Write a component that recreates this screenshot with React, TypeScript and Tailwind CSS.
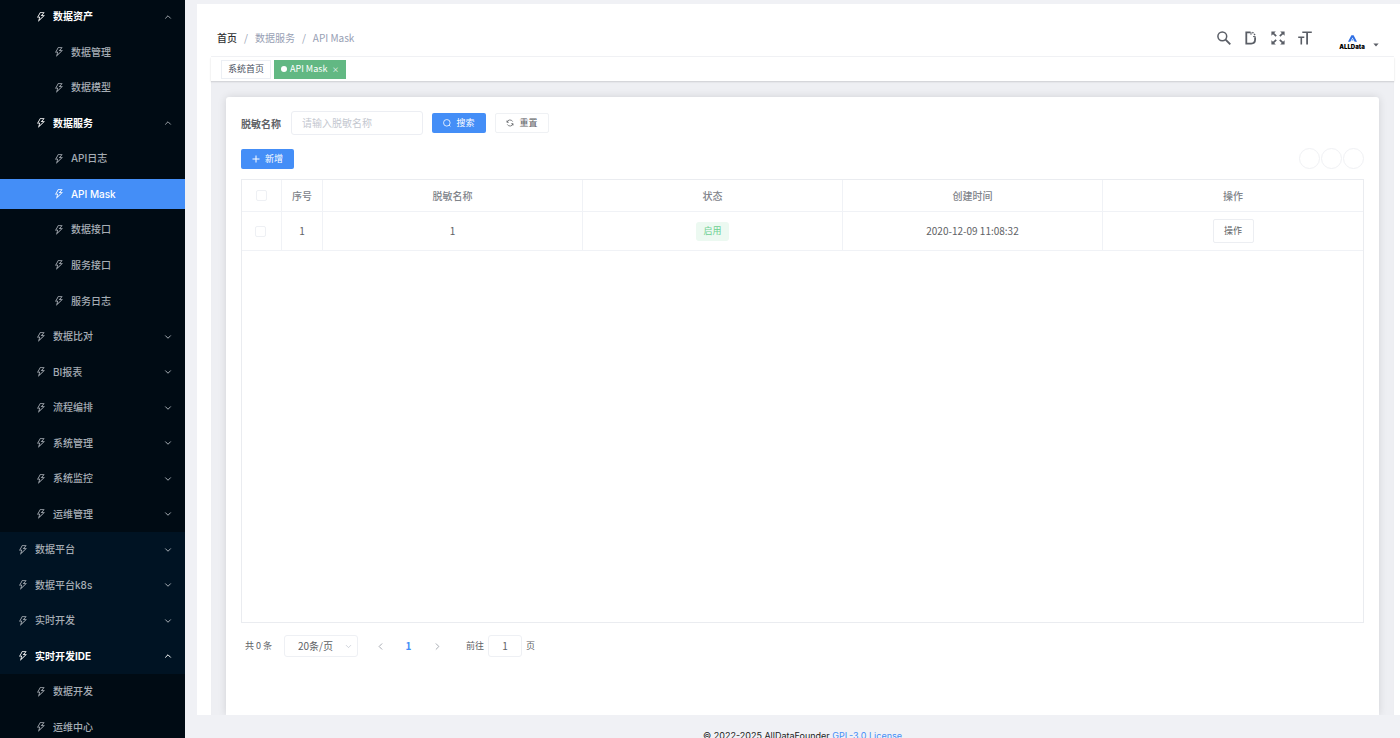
import { AiOutlineThunderbolt } from "react-icons/ai";
import { ChevronDown, ChevronLeft, ChevronRight, ChevronUp } from "lucide-react";

type MenuItem = {
  label: string;
  level: 1 | 2 | 3;
  state?: "open" | "closed";
  active?: boolean;
};

const menu: MenuItem[] = [
  { label: "数据资产", level: 2, state: "open" },
  { label: "数据管理", level: 3 },
  { label: "数据模型", level: 3 },
  { label: "数据服务", level: 2, state: "open" },
  { label: "API日志", level: 3 },
  { label: "API Mask", level: 3, active: true },
  { label: "数据接口", level: 3 },
  { label: "服务接口", level: 3 },
  { label: "服务日志", level: 3 },
  { label: "数据比对", level: 2, state: "closed" },
  { label: "BI报表", level: 2, state: "closed" },
  { label: "流程编排", level: 2, state: "closed" },
  { label: "系统管理", level: 2, state: "closed" },
  { label: "系统监控", level: 2, state: "closed" },
  { label: "运维管理", level: 2, state: "closed" },
  { label: "数据平台", level: 1, state: "closed" },
  { label: "数据平台k8s", level: 1, state: "closed" },
  { label: "实时开发", level: 1, state: "closed" },
  { label: "实时开发IDE", level: 1, state: "open" },
  { label: "数据开发", level: 2 },
  { label: "运维中心", level: 2 },
];

const indent = { 1: "pl-[17px]", 2: "pl-[35px]", 3: "pl-[53px]" };

function SideMenu() {
  return (
    <nav className="w-[185px] shrink-0 overflow-hidden bg-[#001120] font-['Inter','Noto_Sans_CJK_SC',sans-serif]">
      <ul className="-mt-px flex h-[746px] flex-col">
        {menu.map((item) => {
          const open = item.state === "open";
          const tone = item.active || open ? "text-white" : "text-[#a6adb4]";
          return (
            <li
              key={item.label}
              className={`flex flex-1 items-center ${item.level === 1 ? "bg-[#001323]" : "bg-[#000b14]"}`}
            >
              <a
                href="#"
                className={`flex h-[30px] w-full items-center pr-3 text-[10px] ${indent[item.level]} ${tone} ${
                  item.active ? "bg-[#448ef7] font-medium" : open ? "font-bold" : "font-medium"
                }`}
              >
                <AiOutlineThunderbolt size={12} className="mr-1.5 shrink-0" />
                <span className="flex-1 whitespace-nowrap">{item.label}</span>
                {item.state === "closed" && <ChevronDown size={10} strokeWidth={2.4} />}
                {open && (
                  <ChevronUp
                    size={10}
                    strokeWidth={2.4}
                    className={item.level === 1 ? "text-white" : "text-[#9aa0a6]"}
                  />
                )}
              </a>
            </li>
          );
        })}
      </ul>
    </nav>
  );
}

function SearchGlyph() {
  return (
    <svg width="14" height="14" viewBox="0 0 14 14" fill="none" stroke="#5a5e66">
      <circle cx="5.3" cy="5.3" r="4.4" strokeWidth="1.5" />
      <path d="M8.6 8.6l4.7 4.7" strokeWidth="1.9" />
    </svg>
  );
}

function DocGlyph() {
  return (
    <svg width="14" height="14" viewBox="0 0 14 14" fill="none" stroke="#5a5e66">
      <path d="M6.6 1.4H2.3v11.2h4.9c2.7 0 3.9-1.5 3.9-4V6.2" strokeWidth="1.8" />
      <path d="M7 1.2v2.6" strokeWidth="1" />
      <path d="M8.4 1.2l3.2 3.4" strokeWidth="1.3" strokeDasharray="1.5 .9" />
      <path d="M9 5.6h2.6" strokeWidth="1" />
    </svg>
  );
}

function FullscreenGlyph() {
  return (
    <svg width="14" height="14" viewBox="0 0 14 14" fill="#5a5e66" stroke="#5a5e66">
      <path stroke="none" d="M.4.4h4.4L.4 4.8zM13.6.4H9.2l4.4 4.4zM.4 13.6h4.4L.4 9.2zM13.6 13.6H9.2l4.4-4.4z" />
      <path strokeWidth="1.7" d="M1.8 1.8l3.4 3.4M12.2 1.8L8.8 5.2M1.8 12.2l3.4-3.4M12.2 12.2L8.8 8.8" />
    </svg>
  );
}

function FontSizeGlyph() {
  return (
    <svg width="14" height="14" viewBox="0 0 14 14" fill="#5a5e66">
      <path d="M4.3 .4H13.8V2H10V13.6H8.2V2H4.3zM.2 5.4H6.3V6.9H4.1V13.6H2.5V6.9H.2z" />
    </svg>
  );
}

function Logo() {
  return (
    <span className="flex w-[26px] flex-col items-center">
      <svg width="9" height="7" viewBox="0 0 9 7">
        <path d="M3.4.2h2.2L9 6.8H6.7L4.5 2.5 2.3 6.8H0z" fill="#2f6fe4" />
        <path d="M4.5 3.4l1.2 2.1H3.3z" fill="#5fa0f5" />
      </svg>
      <span className="mt-px font-['Inter',sans-serif] text-[6px] leading-[7px] font-black text-black">
        ALLData
      </span>
    </span>
  );
}

function Header() {
  return (
    <header className="flex h-[53px] items-center border-b border-[#f2f3f6] pt-[14px] pr-[15px] pl-[6px]">
      <ol className="flex flex-1 items-center gap-[7px] text-[10px] text-[#97a0b4]">
        <li>
          <a href="#" className="font-medium text-[#303133]">首页</a>
        </li>
        <li>/</li>
        <li>数据服务</li>
        <li>/</li>
        <li>API Mask</li>
      </ol>
      <div className="flex items-center gap-[13px] pt-[2px]">
        <button aria-label="搜索菜单"><SearchGlyph /></button>
        <button aria-label="文档"><DocGlyph /></button>
        <button aria-label="全屏"><FullscreenGlyph /></button>
        <button aria-label="字号"><FontSizeGlyph /></button>
      </div>
      <button aria-label="用户菜单" className="ml-[27px] flex items-center gap-2 pt-[11px]">
        <Logo />
        <svg width="6" height="4" viewBox="0 0 7 4" fill="#5a5e66" className="mt-1">
          <path d="M.4.2h6.2L3.5 3.8z" />
        </svg>
      </button>
    </header>
  );
}

function TagBar() {
  return (
    <div className="flex h-6 items-center gap-[3px] pl-[10px] text-[9px] shadow-[0_1px_2px_rgba(0,0,0,0.14)]">
      <a href="#" className="flex h-[19px] items-center border border-[#eceff4] bg-white px-[6px] text-[#495060]">
        系统首页
      </a>
      <a href="#" className="flex h-[19px] items-center bg-[#62b883] px-[7px] text-white">
        <span className="mr-[3px] size-[6px] rounded-full bg-white" />
        API Mask
        <span className="ml-1 w-2 text-center text-[7px]">×</span>
      </a>
    </div>
  );
}

function Filters() {
  return (
    <form className="flex items-center text-[9px]">
      <label htmlFor="mask-name" className="mr-[10px] text-[10px] font-bold text-[#606266]">
        脱敏名称
      </label>
      <input
        id="mask-name"
        placeholder="请输入脱敏名称"
        className="mr-[9px] h-6 w-[132px] rounded-[3px] border border-[#eceef3] px-[10px] pb-[2px] text-[10px] text-[#606266] placeholder:text-[#c4c8d0]"
      />
      <button type="button" className="mr-[9px] flex h-5 w-[54px] items-center justify-center gap-[5px] rounded-[2px] bg-[#448ef7] text-white">
        <svg width="8" height="8" viewBox="0 0 9 9" fill="none" stroke="currentColor" strokeWidth=".9">
          <circle cx="4.3" cy="4.3" r="3.7" />
          <path d="M6.9 6.9l1.4 1.4" />
        </svg>
        搜索
      </button>
      <button type="button" className="flex h-5 w-[54px] items-center justify-center gap-[5px] rounded-[2px] border border-[#eff1f4] text-[#606266]">
        <svg width="8" height="8" viewBox="0 0 9 9" fill="none" stroke="currentColor" strokeWidth=".9">
          <path d="M1.2 3.6A3.4 3.4 0 0 1 7.5 2.9M7.8 5.4A3.4 3.4 0 0 1 1.5 6.1M1.1 1.7v2h2M7.9 7.3v-2h-2" />
        </svg>
        重置
      </button>
    </form>
  );
}

function Toolbar() {
  const circle = "size-[21px] rounded-full border border-[#f0f1f4]";
  return (
    <div className="mt-[13px] flex items-center justify-between">
      <button className="flex h-5 w-[53px] items-center justify-center gap-[5px] rounded-[2px] bg-[#448ef7] text-[9px] text-white">
        <svg width="8" height="8" viewBox="0 0 8 8" stroke="currentColor" strokeWidth="1">
          <path d="M4 .5v7M.5 4h7" />
        </svg>
        新增
      </button>
      <div className="flex gap-px">
        <button aria-label="隐藏搜索" className={circle} />
        <button aria-label="刷新" className={circle} />
        <button aria-label="显隐列" className={circle} />
      </div>
    </div>
  );
}

function Checkbox({ label }: { label: string }) {
  return (
    <input
      type="checkbox"
      aria-label={label}
      className="block size-[11px] appearance-none rounded-[2px] border border-[#eef0f4] bg-white"
    />
  );
}

function MaskTable() {
  const cell = "border-r border-b border-[#f0f2f6] p-0 last:border-r-0";
  return (
    <div className="mt-[10px] min-h-[200px] flex-1 border border-[#eaecf0]">
      <table className="w-full table-fixed border-separate border-spacing-0 text-center text-[10px] text-[#606266]">
        <colgroup>
          <col className="w-[40px]" />
          <col className="w-[41px]" />
          <col />
          <col />
          <col />
          <col />
        </colgroup>
        <thead>
          <tr className="h-8 text-[#80838a]">
            <th className={cell}>
              <span className="flex justify-center"><Checkbox label="全选" /></span>
            </th>
            {["序号", "脱敏名称", "状态", "创建时间", "操作"].map((title) => (
              <th key={title} className={`${cell} font-medium`}>{title}</th>
            ))}
          </tr>
        </thead>
        <tbody>
          <tr className="h-[39px]">
            <td className={cell}>
              <span className="flex justify-center pr-[2px]"><Checkbox label="选择第 1 行" /></span>
            </td>
            <td className={`${cell} pb-[2px]`}>1</td>
            <td className={`${cell} pb-[2px]`}>1</td>
            <td className={cell}>
              <span className="inline-flex h-[19px] items-center rounded-[3px] bg-[#ecf9f1] px-[7px] align-middle text-[9px] text-[#6dd091]">
                启用
              </span>
            </td>
            <td className={`${cell} pb-[2px]`}>2020-12-09 11:08:32</td>
            <td className={cell}>
              <button className="h-6 w-[41px] rounded-[2px] border border-[#eceef2] align-middle text-[9px]">操作</button>
            </td>
          </tr>
        </tbody>
      </table>
    </div>
  );
}

function Pagination() {
  return (
    <div className="mt-3 flex h-[22px] items-center pl-1 text-[10px] text-[#606266]">
      <span className="w-[39px] text-[9px]">共 0 条</span>
      <span className="relative flex items-center">
        <select
          aria-label="每页条数"
          className="h-[22px] w-[74px] appearance-none rounded-[3px] border border-[#eef0f4] bg-white pb-[2px] pl-[13px]"
        >
          <option>20条/页</option>
        </select>
        <ChevronDown size={9} strokeWidth={1.6} className="pointer-events-none absolute right-[5px] text-[#b4bac6]" />
      </span>
      <button aria-label="上一页" className="ml-4 flex w-3 justify-center text-[#a0a4ac]">
        <ChevronLeft size={11} strokeWidth={2} />
      </button>
      <button className="mx-[17px] w-[11px] pb-px font-bold text-[#448ef7]">1</button>
      <button aria-label="下一页" className="mr-[23px] flex w-3 justify-center text-[#a0a4ac]">
        <ChevronRight size={11} strokeWidth={2} />
      </button>
      <label className="flex items-center gap-1 text-[9px]">
        前往
        <input
          defaultValue="1"
          className="h-[22px] w-[34px] rounded-[3px] border border-[#eef0f4] pb-[2px] text-center text-[10px]"
        />
        页
      </label>
    </div>
  );
}

export default function App() {
  return (
    <div className="flex h-screen overflow-hidden bg-[#f0f1f5] font-['Noto_Sans_CJK_SC',sans-serif]">
      <SideMenu />
      <div className="flex min-w-0 flex-1 flex-col">
        <main className="mt-1 ml-3 flex min-h-0 flex-1 flex-col bg-white pr-[6px] pl-[14px]">
          <Header />
          <TagBar />
          <div className="flex min-h-0 flex-1 flex-col overflow-hidden bg-[#eeeff3] px-[15px] pt-4 shadow-[inset_0_2px_2px_-1px_rgba(0,0,0,0.14)]">
            <section className="flex flex-1 flex-col rounded-t-[3px] bg-white px-[15px] pt-[14px] pb-[58px] shadow-[0_0_8px_rgba(0,0,0,0.12)]">
              <Filters />
              <Toolbar />
              <MaskTable />
              <Pagination />
            </section>
          </div>
        </main>
        <footer className="h-[23px] shrink-0 pt-[15px] pl-5 text-center font-['Inter',sans-serif] text-[9px] leading-3 text-[#222]">
          © 2022-2025 AllDataFounder <a href="#" className="text-[#448ef7]">GPL-3.0 License</a>
        </footer>
      </div>
    </div>
  );
}
